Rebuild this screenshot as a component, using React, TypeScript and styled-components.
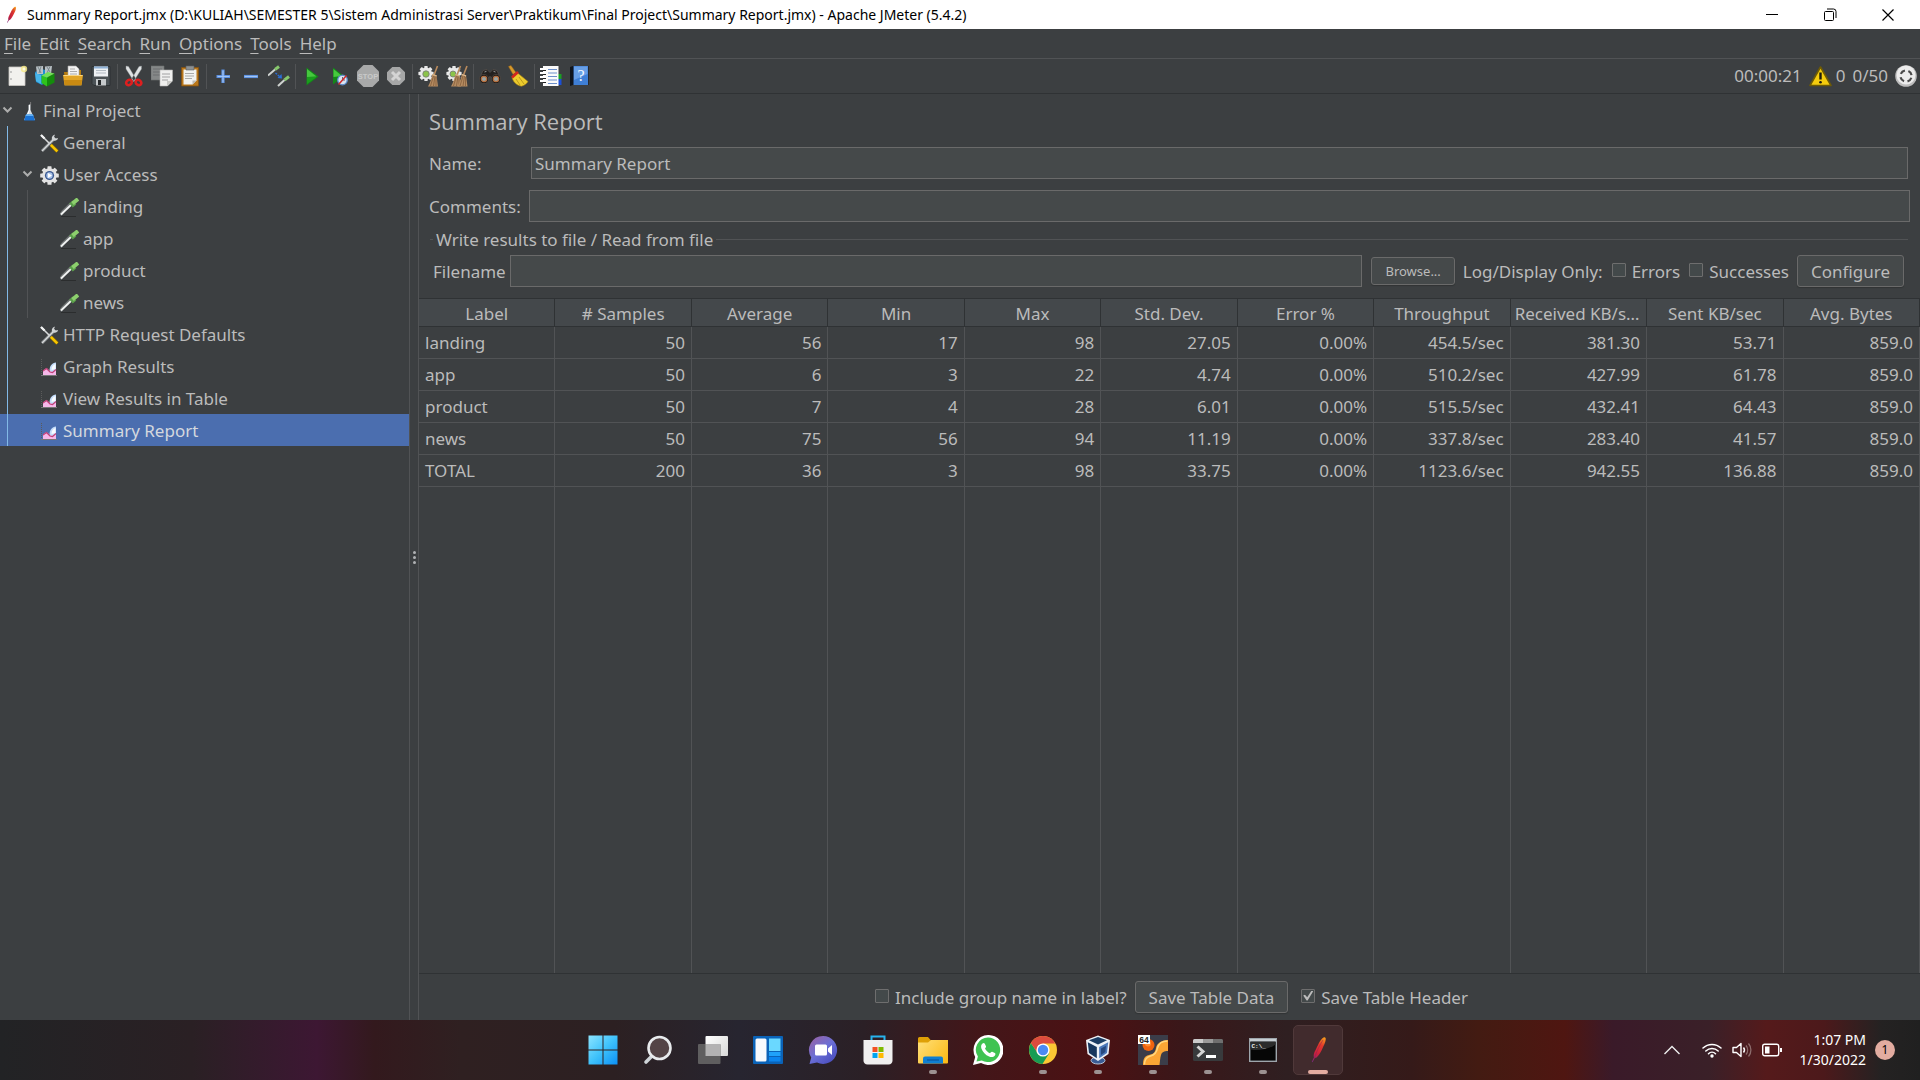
import React from "react";
import styled, { createGlobalStyle, css } from "styled-components";

const color = {
  panel: "#3c3f41",
  field: "#45494a",
  header: "#44484b",
  fieldBorder: "#6a6a6a",
  line: "#515355",
  dark: "#2f3234",
  text: "#bbbbbb",
  select: "#4b6eaf",
  guide: "#82b9e6",
};

const uiFont = `"Noto Sans", "Open Sans", sans-serif`;

const GlobalStyle = createGlobalStyle`
  * { box-sizing: border-box; }
  body { margin: 0; background: ${color.panel}; font-family: ${uiFont}; }
  button, input { font-family: inherit; }
`;

/* ---------- window frame ---------- */

const Screen = styled.div`
  height: 100vh;
  display: flex;
  flex-direction: column;
  overflow: hidden;
  background: ${color.panel};
  color: ${color.text};
  font-size: 17px;
`;

const TitleBar = styled.header`
  flex: none;
  height: 29px;
  display: flex;
  align-items: center;
  padding: 0 3px 0 2px;
  background: #fff;
  color: #000;
  svg { display: block; }
`;

const TitleText = styled.h1`
  flex: 1;
  margin: 0 0 0 7px;
  font-size: 14px;
  line-height: 20px;
  font-weight: 400;
  white-space: nowrap;
`;

const WindowButton = styled.button`
  width: 58px;
  height: 29px;
  padding: 0;
  border: 0;
  background: none;
  display: grid;
  place-items: center;
`;

const MenuBar = styled.nav`
  flex: none;
  height: 30px;
  display: flex;
  border-bottom: 1px solid ${color.line};
`;

const MenuItem = styled.button`
  padding: 0 4px;
  border: 0;
  background: none;
  color: ${color.text};
  font-size: 17px;
  line-height: 29px;
  &::first-letter { text-decoration: underline; text-underline-offset: 3px; }
`;

const ToolBar = styled.div`
  flex: none;
  height: 35px;
  display: flex;
  align-items: center;
  padding: 0 3px;
  border-bottom: 1px solid ${color.dark};
`;

const ToolButton = styled.button`
  width: 28px;
  height: 30px;
  padding: 0;
  border: 0;
  background: none;
  display: grid;
  place-items: center;
`;

const ToolSeparator = styled.span`
  width: 1px;
  height: 25px;
  margin: 0 2px;
  background: ${color.line};
`;

const Status = styled.div`
  margin-left: auto;
  display: flex;
  align-items: center;
  gap: 7px;
  line-height: 24px;
`;

const Warnings = styled.span`
  display: flex;
  align-items: center;
  gap: 4px;
`;

const Workspace = styled.main`
  flex: 1;
  min-height: 0;
  display: grid;
  grid-template-columns: 410px 8px minmax(0, 1fr);
`;

/* ---------- tree ---------- */

const TreePane = styled.nav`
  border-right: 1px solid ${color.line};
`;

const TreeList = styled.ul`
  list-style: none;
  margin: 0;
  padding: 0;
`;

const TreeRow = styled.div<{ $depth: number; $selected?: boolean }>`
  height: 32px;
  display: flex;
  align-items: center;
  padding: 2px 0 0 ${(p) => p.$depth * 20}px;
  line-height: 24px;
  white-space: nowrap;
  ${(p) => p.$selected && css`background: ${color.select}; color: #d4d8de;`}
`;

const Toggle = styled.span`
  width: 20px;
  flex: none;
  padding: 0 0 2px 2px;
  svg { display: block; }
`;

const TreeIcon = styled.span`
  width: 20px;
  margin-right: 3px;
  flex: none;
  svg { display: block; }
`;

const Branch = styled(TreeList)<{ $depth: number; $active?: boolean }>`
  position: relative;
  &::before {
    content: "";
    position: absolute;
    top: 0;
    bottom: 0;
    left: ${(p) => p.$depth * 20 + 7}px;
    width: 1px;
    background: ${(p) => (p.$active ? color.guide : color.line)};
  }
`;

const Splitter = styled.div`
  display: flex;
  flex-direction: column;
  align-items: center;
  justify-content: center;
  gap: 2px;
`;

const Grip = styled.i`
  width: 3px;
  height: 3px;
  border-radius: 50%;
  background: #afb1b3;
`;

/* ---------- report panel ---------- */

const Report = styled.section`
  display: flex;
  flex-direction: column;
  min-height: 0;
  border-left: 1px solid ${color.line};
  padding-top: 9px;
`;

const ReportTitle = styled.h2`
  margin: 0 10px 8px;
  font-family: "Open Sans", "Noto Sans", sans-serif;
  font-size: 22px;
  line-height: 36px;
  font-weight: 400;
`;

const FieldRow = styled.div<{ $wide?: boolean }>`
  display: flex;
  align-items: center;
  margin-bottom: ${(p) => (p.$wide ? 5 : 11)}px;
  padding: 0 ${(p) => (p.$wide ? 10 : 12)}px 0 10px;
  label { width: ${(p) => (p.$wide ? 100 : 102)}px; flex: none; }
`;

const TextField = styled.input`
  flex: 1;
  min-width: 0;
  height: 32px;
  padding: 0 3px;
  border: 1px solid ${color.fieldBorder};
  background: ${color.field};
  color: ${color.text};
  font-size: 17px;
  outline: 0;
`;

const FileGroup = styled.fieldset`
  margin: 0 12px 0 11px;
  padding: 3px 4px 11px 3px;
  border: 0;
  border-top: 1px solid ${color.line};
  min-width: 0;
`;

const Legend = styled.legend`
  padding: 1px 3px 0;
  line-height: 24px;
`;

const FileRow = styled.div`
  display: flex;
  align-items: center;
`;

const FileLabel = styled.label`
  width: 77px;
  flex: none;
`;

const Button = styled.button<{ $small?: boolean }>`
  flex: none;
  height: ${(p) => (p.$small ? 28 : 32)}px;
  padding: 0 13px;
  border: 1px solid ${color.fieldBorder};
  border-radius: 3px;
  background: ${color.field};
  box-shadow: 0 1px 1px #313435;
  color: ${color.text};
  font-size: ${(p) => (p.$small ? 13 : 17)}px;
  white-space: nowrap;
`;

const CheckLabel = styled.label`
  display: flex;
  align-items: center;
  gap: 6px;
  white-space: nowrap;
`;

const Controls = styled.div`
  flex: none;
  display: flex;
  align-items: center;
  gap: 8px;
  padding-left: 9px;
  white-space: nowrap;
  ${CheckLabel} { margin-left: 1px; }
`;

const Check = styled.input`
  appearance: none;
  flex: none;
  width: 14px;
  height: 14px;
  margin: 0 0 3px;
  border: 1px solid #6e6e6e;
  border-radius: 1px;
  background: #43494a;
  display: grid;
  place-items: center;
  &:checked::after {
    content: "";
    width: 10px;
    height: 10px;
    background: #bbbbbb;
    clip-path: polygon(0 50%, 18% 42%, 40% 68%, 84% 0, 100% 8%, 44% 100%, 34% 100%);
  }
`;

const TableArea = styled.div`
  flex: 1;
  min-height: 0;
  display: grid;
  border-bottom: 1px solid ${color.dark};
`;

const Table = styled.table`
  width: 100%;
  height: 100%;
  table-layout: fixed;
  border-collapse: separate;
  border-spacing: 0;
`;

const HeadCell = styled.th`
  height: 29px;
  padding: 2px 4px 0;
  border: solid ${color.dark};
  border-width: 1px 1px 1px 0;
  background: ${color.header};
  font-weight: 400;
  line-height: 24px;
  text-align: center;
  white-space: nowrap;
  overflow: hidden;
  text-overflow: ellipsis;
`;

const Cell = styled.td`
  height: 32px;
  padding: 0 6px;
  border: solid ${color.line};
  border-width: 0 1px 1px 0;
  line-height: 24px;
  text-align: right;
  white-space: nowrap;
  &:first-child { text-align: left; }
`;

const FillCell = styled.td`
  padding: 0;
  border-right: 1px solid ${color.line};
`;

const Footer = styled.div`
  flex: none;
  height: 46px;
  display: flex;
  align-items: center;
  justify-content: center;
  gap: 8px;
  padding-left: 4px;
`;

const HeaderOption = styled(CheckLabel)`
  margin-left: 5px;
`;

/* ---------- taskbar ---------- */

const TaskBar = styled.footer`
  flex: none;
  height: 60px;
  display: grid;
  grid-template-columns: 1fr auto 1fr;
  align-items: center;
  color: #fff;
  background: linear-gradient(90deg, #222325 0%, #2a2024 10%, #3d1733 16.5%, #33191d 19.5%, #2f2021 24%, #2c2022 32%,
    #272530 38.5%, #2b2026 45%, #431619 51%, #4b1113 57%, #3a1719 61.5%, #2f1f21 67%, #351a19 73.5%, #431b12 77%,
    #4f1611 81.5%, #3a1a29 84%, #3a2028 89%, #551a1b 92%, #4c191b 95%, #242222 98%, #202020 100%);
`;

const Apps = styled.div`
  grid-column: 2;
  display: flex;
  gap: 5px;
`;

const AppButton = styled.button<{ $active?: boolean; $running?: boolean }>`
  width: 50px;
  height: 50px;
  padding: 0;
  border: 1px solid ${(p) => (p.$active ? "#50393a" : "transparent")};
  border-radius: 5px;
  background: ${(p) => (p.$active ? "#412b2d" : "none")};
  display: grid;
  place-items: center;
  position: relative;
  svg { display: block; }
  &::after {
    content: "";
    position: absolute;
    bottom: 0;
    left: 50%;
    transform: translateX(-50%);
    width: ${(p) => (p.$active ? 20 : 8)}px;
    height: ${(p) => (p.$running || p.$active ? 4 : 0)}px;
    border-radius: 2px;
    background: ${(p) => (p.$active ? "#e3aca0" : "#9c9292")};
  }
`;

const Tray = styled.div`
  justify-self: end;
  display: flex;
  align-items: center;
  padding-right: 25px;
  svg { display: block; }
`;

const TrayButton = styled.button<{ $gap?: number }>`
  padding: 0;
  border: 0;
  margin-right: ${(p) => p.$gap ?? 10}px;
  background: none;
`;

const Clock = styled.time`
  margin-left: 8px;
  font-size: 14px;
  line-height: 20px;
  text-align: right;
`;

const Badge = styled.span`
  width: 20px;
  height: 20px;
  margin-left: 9px;
  border-radius: 50%;
  background: #e3aca0;
  color: #000;
  font-size: 12px;
  line-height: 20px;
  text-align: center;
`;

/* ---------- drawings ---------- */

type SvgProps = { size?: number; box?: number; children: React.ReactNode };

const Pic = ({ size = 22, box = 22, children }: SvgProps) => (
  <svg width={size} height={size} viewBox={`0 0 ${box} ${box}`} fill="none" aria-hidden="true">
    {children}
  </svg>
);

const Feather = ({ size, id }: { size: number; id: string }) => (
  <Pic size={size} box={28}>
    <defs>
      <linearGradient id={id} x1="20" y1="1" x2="8" y2="27" gradientUnits="userSpaceOnUse">
        <stop offset="0" stopColor="#f8a11c" />
        <stop offset=".3" stopColor="#e2392b" />
        <stop offset=".65" stopColor="#c9203f" />
        <stop offset="1" stopColor="#6d2a85" />
      </linearGradient>
    </defs>
    <path d="M20 1.200c1.400-.2 2 .8 1.700 2.500-.4 2.800-1.400 4.800-2.600 7.300-1.700 4-3.600 7.500-6.500 10.500l-1.800.5-2.300 4.200-.7-.4 2.100-4.300c-.5-1.800-.1-3.800.7-5.700C13.500 11 15.500 3.500 20 1.200z" fill={`url(#${id})`} />
    <path d="M19 4c-3.500 5.500-6.500 11.500-8.500 18" stroke="#8b1f52" strokeWidth=".5" />
  </Pic>
);

const GearShape = ({ cx, cy, r, fill = "#e9e9e9" }: { cx: number; cy: number; r: number; fill?: string }) => (
  <g>
    {[0, 45, 90, 135].map((a) => (
      <rect key={a} x={cx - r * 0.22} y={cy - r} width={r * 0.44} height={r * 2} rx=".6" fill={fill} transform={`rotate(${a} ${cx} ${cy})`} />
    ))}
    <circle cx={cx} cy={cy} r={r * 0.78} fill={fill} />
  </g>
);

const BroomHead = ({ x }: { x: number }) => (
  <g transform={`translate(${x} 0)`}>
    <path d="M17 1l-3.500 9" stroke="#b98a5c" strokeWidth="1.600" />
    <path d="M12 9l4 1.300 1.500 11.200H7.500C10 17 11 13 12 9z" fill="#b58b60" />
    <path d="M13 11l-3 10M14.500 11l-1.500 10M15.500 12v9" stroke="#7d5836" strokeWidth=".7" />
    <path d="M11.800 9.500l4.300 1.400" stroke="#d8b68c" strokeWidth="1.200" />
  </g>
);

const icons = {
  new: (
    <Pic>
      <path d="M3 2h16v18.500H3z" fill="#f2f1ee" stroke="#c9c7c2" strokeWidth=".8" />
      <path d="M5 6v2M5 13v2" stroke="#999" />
      <circle cx="18" cy="4" r="3.200" fill="#f6e98a" opacity=".85" /><circle cx="18" cy="4" r="1.500" fill="#fffbe0" />
    </Pic>
  ),
  templates: (
    <Pic>
      <path d="M1 7l7-3 6 2v8l-6 6-6-3z" fill="#1f8fd0" />
      <path d="M2 1.500l7-.5v8H3zM11 1.500l7-.5-1 8h-6z" fill="#b9c1c5" /><path d="M4 2l3 6M13 2l3 5M7 1.500L5 8M16 1.500L13 8" stroke="#748187" strokeWidth=".9" />
      <path d="M1 8l6 2v9l-5-3z" fill="#48b5ea" />
      <path d="M7.500 10.500l5.500 2v9L7.500 18z" fill="#2fc41c" /><path d="M13 12.500l7.500-4v9L13 21.500z" fill="#148c0c" /><path d="M7.500 10.500L14 7l6.500 1.500-7.500 4z" fill="#72df57" />
    </Pic>
  ),
  open: (
    <Pic>
      <path d="M2 7h7l1-2h9v13H3z" fill="#b57c10" />
      <path d="M6 1h8l3 3v8H6z" fill="#f3f3f3" stroke="#aaa" strokeWidth=".6" /><path d="M8 4h5M8 6.500h7M8 9h7" stroke="#999" strokeWidth=".8" />
      <path d="M1 10h20l-1.500 10.500h-17z" fill="#e2a526" /><path d="M1.500 10.500h19" stroke="#f8d582" /><path d="M2 15h18l-.7 5H2.700z" fill="#c98a12" />
    </Pic>
  ),
  save: (
    <Pic>
      <path d="M2 1.500h18v19H4l-2-2z" fill="#4b5256" stroke="#2a2e30" strokeWidth=".8" />
      <path d="M4 1.500h14v10H4z" fill="#eef1f4" /><path d="M4 1.500h14v2H4z" fill="#8fb1d6" /><path d="M6 5.500h10M6 8h10" stroke="#aab4bd" strokeWidth=".9" />
      <path d="M6 14h10v6.500H6z" fill="#c6cacc" /><path d="M8 15h3v5H8z" fill="#25292b" />
    </Pic>
  ),
  cut: (
    <Pic>
      <path d="M3 1l2.500.5L13 14l-2 2.500L3 4zM18.500 1L16 1.500 8.500 14l2 2.500L18.500 4z" fill="#dfe2e3" stroke="#8d9396" strokeWidth=".4" />
      <ellipse cx="6" cy="17.500" rx="3" ry="2.500" transform="rotate(-35 6 17.500)" stroke="#dd1f1f" strokeWidth="2.600" />
      <ellipse cx="15.500" cy="17.500" rx="3" ry="2.500" transform="rotate(35 15.500 17.500)" stroke="#dd1f1f" strokeWidth="2.600" />
    </Pic>
  ),
  copy: (
    <Pic>
      <path d="M0 1h13v14H0z" fill="#858888" stroke="#6c6f70" strokeWidth=".6" /><path d="M2 4h9M2 7h7M2 10h7" stroke="#6c6f70" />
      <path d="M9 5h12.500v11l-5 5H9z" fill="#efefee" stroke="#b4b4b2" strokeWidth=".6" /><path d="M11 9h8M11 12h8M11 15h6" stroke="#999" strokeWidth=".9" /><path d="M16 21v-5h5z" fill="#c9c9c6" />
    </Pic>
  ),
  paste: (
    <Pic>
      <path d="M2.500 2.500h17v18.500h-17z" fill="#b9771a" stroke="#815012" strokeWidth=".8" />
      <path d="M4.500 4.500h13v11l-4 4h-9z" fill="#f2f2f0" /><path d="M6 8.500h9M6 11h9M6 13.500h7" stroke="#a2a2a0" strokeWidth=".9" /><path d="M13.500 19.500v-4h4z" fill="#bcbcb8" />
      <path d="M7 1h8v4H7z" fill="#8c9092" stroke="#5c5f61" strokeWidth=".6" />
    </Pic>
  ),
  plus: (
    <Pic><path d="M11 4.500v13.500M4.500 11.500h13.500" stroke="#5a8fe0" strokeWidth="3.200" /><path d="M11 5.500v12M5.500 11.500h12" stroke="#a3c5f3" strokeWidth="1.200" /></Pic>
  ),
  minus: (
    <Pic><path d="M4 11.500h14" stroke="#5a8fe0" strokeWidth="3.200" /><path d="M4.500 11.500h13" stroke="#a3c5f3" strokeWidth="1.200" /></Pic>
  ),
  toggle: (
    <Pic>
      <path d="M0 10.500l7-6" stroke="#cfd3d0" strokeWidth="2" /><path d="M7 4.500L11 1.500" stroke="#86c76c" strokeWidth="3" />
      <path d="M10 21l6.500-6" stroke="#cfd3d0" strokeWidth="2" /><path d="M16.500 15l4.500-3.500" stroke="#86c76c" strokeWidth="3" />
      <path d="M7.500 8l4 3.500" stroke="#2a6fd8" strokeWidth="1.400" strokeDasharray="2 1" /><path d="M14 13.500l-4.500-.5 4-4z" fill="#2a6fd8" />
    </Pic>
  ),
  start: (
    <Pic><path d="M5.500 2.500L17.500 11.500 5.500 20.500z" fill="#14861a" /><path d="M6 4l9.500 7.500L6 12z" fill="#46c83e" /><path d="M6 12h9.500L6 19z" fill="#1a9e1c" /></Pic>
  ),
  startNoPause: (
    <Pic>
      <path d="M4 2.500L15 11 4 19.500z" fill="#14861a" /><path d="M4.500 4l8.500 7-8.500 1z" fill="#46c83e" />
      <circle cx="13.500" cy="15" r="4.800" fill="#d9e4f2" stroke="#5b8ac9" strokeWidth="1.300" /><path d="M13.500 12v3h2.500" stroke="#667" /><path d="M9.500 19.500l8-9" stroke="#d12a2a" strokeWidth="1.500" />
    </Pic>
  ),
  stop: (
    <svg width="22" height="22" viewBox="0 0 22 22" aria-hidden="true">
      <path d="M6.500 0h9L22 6.500v9L15.500 22h-9L0 15.500v-9z" fill="#a8a9a9" />
      <text x="11" y="14" textAnchor="middle" fontFamily="Liberation Sans, sans-serif" fontSize="7.500" fontWeight="700" fill="#c9c9c9">STOP</text>
    </svg>
  ),
  shutdown: (
    <Pic><path d="M7.300 2h7.400L20 7.300v7.400L14.700 20H7.300L2 14.700V7.300z" fill="#a6a7a7" /><path d="M7 7l8 8M15 7l-8 8" stroke="#d4d4d4" strokeWidth="3" /></Pic>
  ),
  clear: (
    <Pic><GearShape cx={8} cy={8.5} r={7.6} /><circle cx="8" cy="9" r="3.200" fill="#8bc34a" stroke="#777" strokeWidth=".8" /><BroomHead x={2.5} /></Pic>
  ),
  clearAll: (
    <Pic><GearShape cx={8} cy={8.5} r={7.6} /><circle cx="7" cy="9" r="3" fill="#8bc34a" stroke="#777" strokeWidth=".8" /><BroomHead x={-2.5} /><BroomHead x={4} /></Pic>
  ),
  search: (
    <Pic>
      <path d="M4 5.500l4-1 3 3 3-3 4 1 3.500 8-4.500 2-6-4-6 4-4.500-2z" fill="#24211f" stroke="#5b534e" strokeWidth=".7" />
      <circle cx="5" cy="14" r="4.600" fill="#1b1918" stroke="#59504a" strokeWidth=".6" /><circle cx="17" cy="14" r="4.600" fill="#1b1918" stroke="#59504a" strokeWidth=".6" />
      <circle cx="5" cy="14" r="2.700" fill="#98a3a2" stroke="#b8703f" strokeWidth="1.200" /><circle cx="17" cy="14" r="2.700" fill="#98a3a2" stroke="#b8703f" strokeWidth="1.200" />
      <path d="M5.500 7l2-.7M14.500 6.300l2 .7" stroke="#999" />
    </Pic>
  ),
  resetSearch: (
    <Pic>
      <path d="M1.500 1.500l2.500-1 5 7-3 2z" fill="#d79a2b" stroke="#94611a" strokeWidth=".5" />
      <path d="M10 7.500l11 9c-1 2-3.500 4-6.500 4.800C9 20.500 5.500 16 5 12z" fill="#eccb2d" stroke="#a17c12" strokeWidth=".6" />
      <path d="M9 14l4 6M12 12l5 7" stroke="#b08d17" strokeWidth=".8" /><path d="M5 12.500l6-5.500" stroke="#d2261e" strokeWidth="2.600" />
    </Pic>
  ),
  functions: (
    <Pic>
      <path d="M16 9h5.500v5H16z" fill="#1b9e25" /><path d="M16 14h5.500v6H16z" fill="#1a4fd6" />
      <path d="M3 1h15.500v20H3z" fill="#fafafa" /><path d="M8 4.500h9M8 8h9M8 11.500h9M8 15h9M8 18.500h9" stroke="#6c8fc9" strokeWidth="1.100" />
      <path d="M0 4h6M0 8h6M0 12h6M0 16h6" stroke="#fff" strokeWidth="2" /><path d="M3 5.500h3M3 9.500h3M3 13.500h3M3 17.500h3" stroke="#222" strokeWidth="1.200" />
    </Pic>
  ),
  help: (
    <svg width="22" height="22" viewBox="0 0 22 22" aria-hidden="true">
      <path d="M2 2l3-1h15.500v19H5l-3 1z" fill="#10151d" /><path d="M5.500 1H20v19H5.500z" fill="#3f7fd6" /><path d="M6 1.500h13.500V9L6 15z" fill="#689fe6" />
      <text x="13" y="16" textAnchor="middle" fontFamily="Liberation Serif, serif" fontSize="16" fill="#f4f8ff">?</text>
    </svg>
  ),
};

const WarningIcon = () => (
  <Pic size={23} box={23}>
    <path d="M11.500 2L22 20.500H1z" fill="#f5cc0d" stroke="#6e5b05" strokeWidth="1.600" strokeLinejoin="round" />
    <path d="M11.500 7.500v7" stroke="#1c1a10" strokeWidth="2.400" /><circle cx="11.500" cy="17.300" r="1.300" fill="#1c1a10" />
  </Pic>
);

const RemoteIcon = () => (
  <Pic>
    <circle cx="11" cy="11" r="10.800" fill="#bdbdbd" /><circle cx="11" cy="10" r="9.500" fill="#ececec" />
    <circle cx="11" cy="11" r="5.600" stroke="#4a4a4a" strokeWidth="2.200" strokeDasharray="5.200 3.600" strokeDashoffset="-1.800" />
  </Pic>
);

const Chevron = () => (
  <svg width="12" height="12" viewBox="0 0 12 12" fill="none" aria-hidden="true">
    <path d="M1.500 3.500L5.500 7.500 9.500 3.500" stroke="#adadad" strokeWidth="2" />
  </svg>
);

const treeIcons = {
  plan: (
    <Pic size={19} box={19}>
      <path d="M8.500 3v5L4 18h11L10.500 8V2z" fill="#d5dde3" /><path d="M9.500 3v5L7 14" stroke="#fff" /><path d="M6 12.500h7L15 18.500H4z" fill="#1a72d4" /><path d="M6 12.500h7l.5 1.500H5.400z" fill="#63b1f3" />
      <path d="M10.600 0v3" stroke="#888" strokeWidth=".8" />
    </Pic>
  ),
  config: (
    <Pic size={19} box={19}>
      <path d="M2 17L15 4" stroke="#85898b" strokeWidth="3" /><path d="M2 17L15 4" stroke="#d8dadb" strokeWidth="1.300" />
      <path d="M13 1.500c-1.500 1.500-1.500 3-.5 4.500 1.500 1 3 1 5-.5L18 4l-2.500.500L14 3l1-2.500z" fill="#d0d3d4" />
      <path d="M1 1l9 9" stroke="#d8dadb" strokeWidth="1.600" /><path d="M1 1l3.500 3.500" stroke="#f2f2f2" strokeWidth="2.300" />
      <path d="M11 11l6.500 6.500" stroke="#8a6a00" strokeWidth="3.500" /><path d="M10.800 10.800l6.500 6.500" stroke="#f7c600" strokeWidth="2.400" />
    </Pic>
  ),
  threads: (
    <Pic size={19} box={19}>
      <GearShape cx={9.5} cy={9.5} r={9.3} fill="#e3e3e3" /><circle cx="9.500" cy="9.500" r="4.600" fill="#37568f" /><circle cx="9.500" cy="9.500" r="3.200" fill="#a9c3ea" /><path d="M8 7l4 2.500L8 12z" fill="#fff" />
    </Pic>
  ),
  sampler: (
    <Pic size={19} box={19}>
      <path d="M1 18.500h15" stroke="#2b2d2e" /><path d="M.5 17L3 13.500l8-8" stroke="#6d7172" strokeWidth="3" /><path d="M1 16.500L12 6" stroke="#f0f2f2" strokeWidth="1.800" />
      <path d="M11 7.500l3.500-3" stroke="#5a9e4a" strokeWidth="5.500" /><path d="M12.500 5.500L18 1" stroke="#8ccf6d" strokeWidth="4" />
    </Pic>
  ),
  listener: (
    <Pic size={19} box={19}>
      <path d="M1.500 1v16.500" stroke="#5b5b5b" strokeDasharray="1 1" /><path d="M1 17.500h16" stroke="#777" />
      <path d="M3 17v-4.500l3.500-2.500 3.500 3 2-1.500 4 .5v5z" fill="#f6b7e9" />
      <path d="M9.500 12.500C9.500 8 12 5 16 4.500V12l-3 2.500z" fill="#c3dcfa" /><path d="M11.500 12C11.500 9 13 6.500 15.500 6v5z" fill="#fafcff" />
      <path d="M3 13l3.500-2.500L10 14l2.500.5L16 11.500" stroke="#c23f77" strokeWidth="1.200" />
    </Pic>
  ),
};

/* ---------- taskbar drawings, 30px box ---------- */

const TaskPic = ({ children }: { children: React.ReactNode }) => <Pic size={30} box={30}>{children}</Pic>;

const taskIcons: { name: string; running?: boolean; active?: boolean; icon: React.ReactNode }[] = [
  {
    name: "Start",
    icon: (
      <TaskPic>
        <defs><linearGradient id="win" x1="0" y1="0" x2="30" y2="30" gradientUnits="userSpaceOnUse"><stop stopColor="#8fe6ff" /><stop offset=".5" stopColor="#3fc2fb" /><stop offset="1" stopColor="#0a8ef5" /></linearGradient></defs>
        <path d="M.5.5h14v14H.500zM15.500.5h14v14h-14zM.5 15.500h14v14H.500zM15.500 15.500h14v14h-14z" fill="url(#win)" />
      </TaskPic>
    ),
  },
  {
    name: "Search",
    icon: (
      <TaskPic>
        <path d="M10 20l-7 7" stroke="#cfd4d8" strokeWidth="3.600" strokeLinecap="round" /><circle cx="16.500" cy="13" r="11" fill="#534446" stroke="#e8ebed" strokeWidth="2.600" />
      </TaskPic>
    ),
  },
  {
    name: "Task View",
    icon: (
      <TaskPic>
        <defs><linearGradient id="tv" x1="8" y1="1" x2="30" y2="21" gradientUnits="userSpaceOnUse"><stop stopColor="#fff" /><stop offset="1" stopColor="#d8d8d8" /></linearGradient></defs>
        <rect x="7.500" y="1" width="22.500" height="20" rx="1" fill="url(#tv)" /><rect x="0" y="9" width="22.500" height="20" rx="1" fill="#5f5e5f" /><path d="M7.500 9h15v12h-15z" fill="#b3b2b3" />
      </TaskPic>
    ),
  },
  {
    name: "Widgets",
    icon: (
      <TaskPic>
        <rect y="1" width="30" height="28" rx="1" fill="#0a63b8" /><rect x="2.500" y="3.500" width="11" height="23" rx="1.500" fill="#f7fafd" />
        <path d="M16 3.500h11.500V16H16z" fill="#6ad8ff" /><path d="M16 17h11.500v4H16z" fill="#1fa2fa" /><path d="M16 22h11.500v4.500H16z" fill="#0b85ee" />
      </TaskPic>
    ),
  },
  {
    name: "Chat",
    icon: (
      <TaskPic>
        <defs><linearGradient id="chat" x1="4" y1="3" x2="24" y2="27" gradientUnits="userSpaceOnUse"><stop stopColor="#9563a8" /><stop offset=".5" stopColor="#6b6fd6" /><stop offset="1" stopColor="#4b4fc0" /></linearGradient></defs>
        <path d="M15 1a14 14 0 1 1-6 26.600L1.500 29l1.700-6.500A14 14 0 0 1 15 1z" fill="url(#chat)" /><rect x="7" y="9.500" width="12" height="11" rx="1.500" fill="#fff" /><path d="M20 13.500l4-3.500v10l-4-3.500z" fill="#fff" />
      </TaskPic>
    ),
  },
  {
    name: "Microsoft Store",
    icon: (
      <TaskPic>
        <path d="M8.500 6V1.500h13V6" stroke="#27b4ee" strokeWidth="2" /><path d="M.500 5h29v20a4 4 0 0 1-4 4.500h-21a4 4 0 0 1-4-4.500z" fill="#f0efef" />
        <path d="M9.500 12h5v5h-5z" fill="#f25022" /><path d="M15.500 12h5v5h-5z" fill="#7fba00" /><path d="M9.500 18h5v5h-5z" fill="#00a4ef" /><path d="M15.500 18h5v5h-5z" fill="#ffb900" />
      </TaskPic>
    ),
  },
  {
    name: "File Explorer",
    running: true,
    icon: (
      <TaskPic>
        <path d="M0 3.500A1.500 1.500 0 0 1 1.500 2H10l3 3.500V9H0z" fill="#dfa006" />
        <defs><linearGradient id="fold" x1="0" y1="5" x2="30" y2="28" gradientUnits="userSpaceOnUse"><stop stopColor="#ffe07a" /><stop offset="1" stopColor="#fbb914" /></linearGradient></defs>
        <path d="M0 7.500h10l3-2.500h17v22.500a1 1 0 0 1-1 1H1a1 1 0 0 1-1-1z" fill="url(#fold)" /><path d="M5 28.500v-5a2 2 0 0 1 2-2h16a2 2 0 0 1 2 2v5z" fill="#0f7fd2" /><path d="M9 25h12" stroke="#0a4f94" />
      </TaskPic>
    ),
  },
  {
    name: "WhatsApp",
    icon: (
      <TaskPic>
        <path d="M15 0a15 15 0 1 1-7 28L0 30l2.200-8A15 15 0 0 1 15 0z" fill="#fff" /><path d="M15 2.500a12.300 12.300 0 1 1-6.200 23L3.500 26.500l1.400-5A12.300 12.300 0 0 1 15 2.500z" fill="#3fc351" />
        <path d="M9.500 8.500c.8-.8 1.800-.8 2.300.2l1.200 2.600c.3.800-.6 1.600-1 2.200 1 2.200 2.800 3.800 5 4.700.7-.5 1.300-1.800 2.200-1.400l2.600 1.300c1 .5.7 1.700.1 2.500-1.400 1.800-3.800 1.800-5.800 1C12.500 20 9.700 17 8.400 13.500c-.6-1.900-.4-3.700 1.100-5z" fill="#fff" />
      </TaskPic>
    ),
  },
  {
    name: "Google Chrome",
    running: true,
    icon: (
      <TaskPic>
        <circle cx="15" cy="15" r="14" fill="#fbc734" />
        <path d="M2.900 8A14 14 0 0 0 14.500 29L21 18.500 15 15 9 17z" fill="#179c55" />
        <path d="M2.900 8A14 14 0 0 1 27.300 8.500H15L9 17z" fill="#dc4b3e" />
        <circle cx="15" cy="15" r="6.600" fill="#fff" /><circle cx="15" cy="15" r="5.200" fill="#4a8af4" />
      </TaskPic>
    ),
  },
  {
    name: "VirtualBox",
    running: true,
    icon: (
      <TaskPic>
        <ellipse cx="15" cy="25.500" rx="7" ry="3.500" fill="#3a5c94" stroke="#b7c3d6" /><path d="M15 .5L27 5l-1.500 14L15 26 4.500 19 3 5z" fill="#eef2f7" />
        <path d="M15 2l9 3.200L15 9.500 6 5.200z" fill="#1b3c63" /><path d="M4.800 7.300L13.800 12v11.300L6 18z" fill="#17365d" /><path d="M25.200 7.300L16.200 12v11.300L24 18z" fill="#4b77b8" /><path d="M18 13.500l5-2.800-.7 6.300L18 20z" fill="#27487e" />
      </TaskPic>
    ),
  },
  {
    name: "UltraEdit 64",
    running: true,
    icon: (
      <svg width="30" height="30" viewBox="0 0 30 30" aria-hidden="true">
        <path d="M0 0h30v30H0z" fill="#3b3d49" /><circle cx="10.500" cy="10" r="6" fill="#f0640f" /><circle cx="10" cy="8.500" r="3" fill="#ff8d32" />
        <path d="M30 5v11c-4 0-6 1-7 4-1 3-1 7-1.500 10H5c0-5 1-9 6-10 4-1 6-2 7-7 .6-4 5-8 12-8z" fill="#fba534" /><path d="M29.500 6c-6 0-9 3-10 7-1 5-3 7-7 8-4 1-6 4-6 8.500" stroke="#ffd77e" strokeWidth="1.500" fill="none" />
        <path d="M0 0h12v9H0z" fill="#fff" /><text x="6" y="7.800" textAnchor="middle" fontFamily="Liberation Sans, sans-serif" fontSize="8.500" fontWeight="700" fill="#222">64</text>
      </svg>
    ),
  },
  {
    name: "Terminal",
    running: true,
    icon: (
      <TaskPic>
        <rect y="4" width="30" height="22" rx="1.500" fill="#383a3c" /><path d="M0 5.500A1.500 1.500 0 0 1 1.500 4H10v4H0z" fill="#cbcbcb" /><path d="M10 4h10v4H10z" fill="#9a9a9a" /><path d="M20 4h8.500A1.500 1.500 0 0 1 30 5.500V8H20z" fill="#6f6f6f" />
        <path d="M4.500 11.500l5.500 5-5.500 5" stroke="#d4d4d4" strokeWidth="3" /><path d="M13 21.500h10" stroke="#fff" strokeWidth="3" />
      </TaskPic>
    ),
  },
  {
    name: "Command Prompt",
    running: true,
    icon: (
      <svg width="30" height="30" viewBox="0 0 30 30" aria-hidden="true">
        <rect x="1.700" y="3.700" width="26.600" height="22.600" fill="#060606" stroke="#9ea6ac" strokeWidth="1.400" /><path d="M2 4h26v2.500H2z" fill="#c7cdd2" />
        <path d="M2.500 14.500c8 1.500 18 0 25-5V7h-25z" fill="#2b2b2b" /><text x="3.500" y="12.500" fontFamily="Liberation Mono, monospace" fontSize="6" fontWeight="700" fill="#eee">C:\_</text>
      </svg>
    ),
  },
  { name: "Apache JMeter", active: true, icon: <Feather size={28} id="featherTask" /> },
];

/* ---------- data ---------- */

type IconName = keyof typeof icons;

const toolGroups: [IconName, string][][] = [
  [["new", "New"], ["templates", "Templates"], ["open", "Open"], ["save", "Save"]],
  [["cut", "Cut"], ["copy", "Copy"], ["paste", "Paste"]],
  [["plus", "Expand All"], ["minus", "Collapse All"], ["toggle", "Toggle"]],
  [["start", "Start"], ["startNoPause", "Start no pauses"], ["stop", "Stop"], ["shutdown", "Shutdown"]],
  [["clear", "Clear"], ["clearAll", "Clear All"]],
  [["search", "Search"], ["resetSearch", "Reset Search"]],
  [["functions", "Function Helper Dialog"], ["help", "Help"]],
];

type Node = { label: string; icon: keyof typeof treeIcons; selected?: boolean; children?: Node[] };

const tree: Node = {
  label: "Final Project",
  icon: "plan",
  children: [
    { label: "General", icon: "config" },
    {
      label: "User Access",
      icon: "threads",
      children: ["landing", "app", "product", "news"].map((label) => ({ label, icon: "sampler" as const })),
    },
    { label: "HTTP Request Defaults", icon: "config" },
    { label: "Graph Results", icon: "listener" },
    { label: "View Results in Table", icon: "listener" },
    { label: "Summary Report", icon: "listener", selected: true },
  ],
};

const columns = ["Label", "# Samples", "Average", "Min", "Max", "Std. Dev.", "Error %", "Throughput", "Received KB/sec", "Sent KB/sec", "Avg. Bytes"];

const rows = [
  ["landing", "50", "56", "17", "98", "27.05", "0.00%", "454.5/sec", "381.30", "53.71", "859.0"],
  ["app", "50", "6", "3", "22", "4.74", "0.00%", "510.2/sec", "427.99", "61.78", "859.0"],
  ["product", "50", "7", "4", "28", "6.01", "0.00%", "515.5/sec", "432.41", "64.43", "859.0"],
  ["news", "50", "75", "56", "94", "11.19", "0.00%", "337.8/sec", "283.40", "41.57", "859.0"],
  ["TOTAL", "200", "36", "3", "98", "33.75", "0.00%", "1123.6/sec", "942.55", "136.88", "859.0"],
];

const TreeNode = ({ node, depth }: { node: Node; depth: number }) => (
  <li>
    <TreeRow $depth={depth} $selected={node.selected}>
      <Toggle>{node.children && <Chevron />}</Toggle>
      <TreeIcon>{treeIcons[node.icon]}</TreeIcon>
      {node.label}
    </TreeRow>
    {node.children && (
      <Branch $depth={depth} $active={depth === 0}>
        {node.children.map((child) => (
          <TreeNode key={child.label} node={child} depth={depth + 1} />
        ))}
      </Branch>
    )}
  </li>
);

export default function App() {
  return (
    <Screen>
      <GlobalStyle />
      <TitleBar>
        <Feather size={18} id="featherTitle" />
        <TitleText>
          Summary Report.jmx (D:\KULIAH\SEMESTER 5\Sistem Administrasi Server\Praktikum\Final Project\Summary Report.jmx) - Apache JMeter (5.4.2)
        </TitleText>
        <WindowButton aria-label="Minimize">
          <Pic size={12} box={12}><path d="M0 5.500h12" stroke="#000" /></Pic>
        </WindowButton>
        <WindowButton aria-label="Restore">
          <Pic size={13} box={13}>
            <rect x=".5" y="3.500" width="9" height="9" rx="1" stroke="#000" /><path d="M3 1h6.500A2.500 2.500 0 0 1 12 3.500V10" stroke="#000" />
          </Pic>
        </WindowButton>
        <WindowButton aria-label="Close">
          <Pic size={12} box={12}><path d="M.5.5l11 11M11.500.5l-11 11" stroke="#000" strokeWidth="1.200" /></Pic>
        </WindowButton>
      </TitleBar>

      <MenuBar>
        {["File", "Edit", "Search", "Run", "Options", "Tools", "Help"].map((m) => (
          <MenuItem key={m}>{m}</MenuItem>
        ))}
      </MenuBar>

      <ToolBar>
        {toolGroups.map((group, i) => (
          <React.Fragment key={i}>
            {i > 0 && <ToolSeparator />}
            {group.map(([name, label]) => (
              <ToolButton key={name} aria-label={label}>{icons[name]}</ToolButton>
            ))}
          </React.Fragment>
        ))}
        <Status>
          <span>00:00:21</span>
          <Warnings><WarningIcon />0</Warnings>
          <span>0/50</span>
          <RemoteIcon />
        </Status>
      </ToolBar>

      <Workspace>
        <TreePane aria-label="Test plan">
          <TreeList><TreeNode node={tree} depth={0} /></TreeList>
        </TreePane>
        <Splitter><Grip /><Grip /><Grip /></Splitter>
        <Report>
          <ReportTitle>Summary Report</ReportTitle>
          <FieldRow>
            <label htmlFor="name">Name:</label>
            <TextField id="name" defaultValue="Summary Report" />
          </FieldRow>
          <FieldRow $wide>
            <label htmlFor="comments">Comments:</label>
            <TextField id="comments" />
          </FieldRow>
          <FileGroup>
            <Legend>Write results to file / Read from file</Legend>
            <FileRow>
              <FileLabel htmlFor="filename">Filename</FileLabel>
              <TextField id="filename" />
              <Controls>
                <Button $small>Browse...</Button>
                <span>Log/Display Only:</span>
                <CheckLabel><Check type="checkbox" />Errors</CheckLabel>
                <CheckLabel><Check type="checkbox" />Successes</CheckLabel>
                <Button>Configure</Button>
              </Controls>
            </FileRow>
          </FileGroup>
          <TableArea>
            <Table>
              <thead>
                <tr>{columns.map((c) => <HeadCell key={c}>{c}</HeadCell>)}</tr>
              </thead>
              <tbody>
                {rows.map((r) => (
                  <tr key={r[0]}>{r.map((v, i) => <Cell key={i}>{v}</Cell>)}</tr>
                ))}
                <tr aria-hidden="true">{columns.map((c) => <FillCell key={c} />)}</tr>
              </tbody>
            </Table>
          </TableArea>
          <Footer>
            <CheckLabel><Check type="checkbox" />Include group name in label?</CheckLabel>
            <Button>Save Table Data</Button>
            <HeaderOption><Check type="checkbox" defaultChecked />Save Table Header</HeaderOption>
          </Footer>
        </Report>
      </Workspace>

      <TaskBar>
        <Apps>
          {taskIcons.map((t) => (
            <AppButton key={t.name} aria-label={t.name} $running={t.running} $active={t.active}>{t.icon}</AppButton>
          ))}
        </Apps>
        <Tray>
          <TrayButton $gap={22} aria-label="Show hidden icons">
            <Pic size={16} box={16}><path d="M.5 12L8 4.500l7.500 7.500" stroke="#eee" strokeWidth="1.400" /></Pic>
          </TrayButton>
          <TrayButton aria-label="Network">
            <Pic size={20} box={20}>
              <path d="M1 8a13 13 0 0 1 18 0M3.800 11a9 9 0 0 1 12.400 0M6.500 13.700a5 5 0 0 1 7 0" stroke="#fff" strokeWidth="1.500" strokeLinecap="round" /><circle cx="10" cy="16" r="1.700" fill="#fff" />
            </Pic>
          </TrayButton>
          <TrayButton aria-label="Volume">
            <Pic size={20} box={20}>
              <path d="M1 7.500h3.500L9 3.500v13l-4.500-4H1z" stroke="#fff" strokeWidth="1.400" strokeLinejoin="round" /><path d="M11.500 7.500a4 4 0 0 1 0 5" stroke="#fff" strokeWidth="1.400" /><path d="M14 5.500a7 7 0 0 1 0 9M16.500 3.500a10 10 0 0 1 0 13" stroke="#8d6c6c" strokeWidth="1.300" />
            </Pic>
          </TrayButton>
          <TrayButton aria-label="Battery">
            <Pic size={20} box={20}>
              <rect x=".7" y="4.200" width="16" height="11.600" rx="2" stroke="#fff" strokeWidth="1.400" /><path d="M3 6.500h4.500v7H3z" fill="#fff" /><path d="M18 8h2v4h-2z" fill="#fff" />
            </Pic>
          </TrayButton>
          <Clock>1:07 PM<br />1/30/2022</Clock>
          <Badge>1</Badge>
        </Tray>
      </TaskBar>
    </Screen>
  );
}
